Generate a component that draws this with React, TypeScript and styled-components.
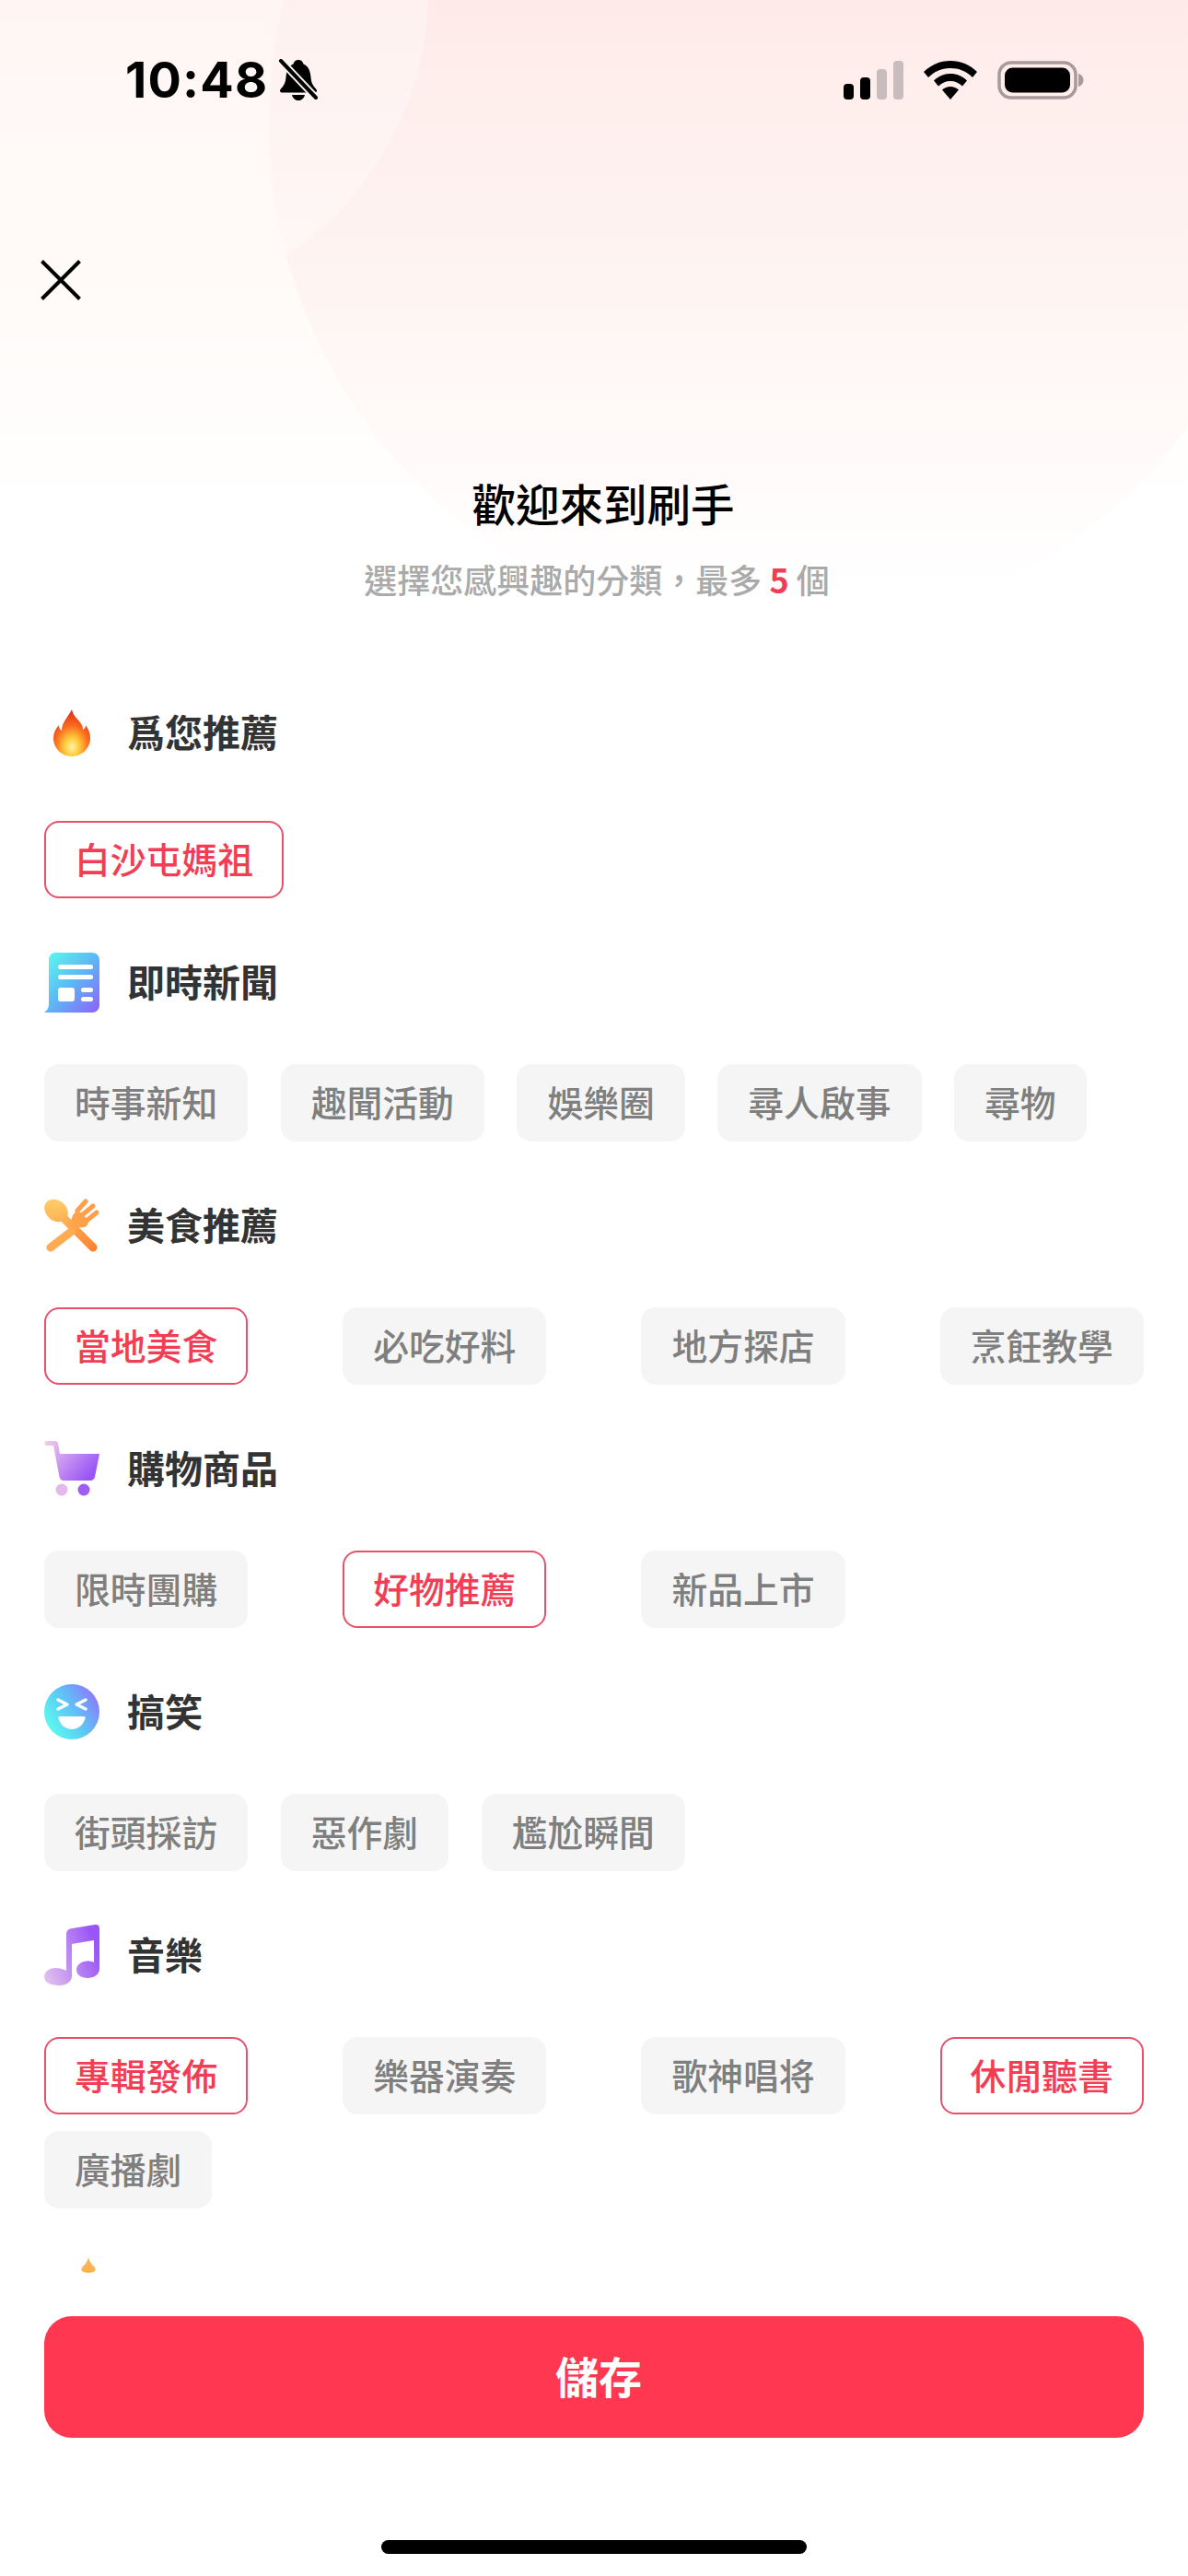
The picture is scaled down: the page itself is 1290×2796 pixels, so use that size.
import * as React from "react";
import styled, {createGlobalStyle} from "styled-components";

const FONT = `"Noto Sans CJK TC", "Noto Sans", sans-serif`;
const RED = "#f23d55";

const GlobalStyle = createGlobalStyle`
  html, body {
    margin: 0;
    padding: 0;
    background: #fff;
  }

  * {
    box-sizing: border-box;
  }
`;

const Page = styled.div`
  position: relative;
  width: 1290px;
  height: 2796px;
  overflow: hidden;
  display: flex;
  flex-direction: column;
  background: #fff;
  font-family: ${FONT};
`;

const Backdrop = styled.div`
  position: absolute;
  top: 0;
  left: 0;
  width: 100%;
  height: 640px;
  overflow: hidden;
  background: linear-gradient(180deg, #fff6f4 0%, #fff9f7 32%, #fffdfc 70%, #fff 88%);
`;

const BigCircle = styled.div`
  position: absolute;
  left: 292px;
  top: -419px;
  width: 1106px;
  height: 1106px;
  border-radius: 50%;
  overflow: hidden;
  background: linear-gradient(180deg, #feebe9 38%, #fef4f2 65%, #fffaf9 81%, #fff 96%);
`;

const SmallCircle = styled.div`
  position: absolute;
  left: -517px;
  top: 64px;
  width: 690px;
  height: 690px;
  border-radius: 50%;
  background: rgba(255, 255, 255, 0.32);
`;

const StatusBar = styled.div`
  position: relative;
  height: 174px;
  display: flex;
  align-items: center;
  justify-content: space-between;
  padding: 0 113px 0 136px;
`;

const TimeGroup = styled.div`
  display: flex;
  align-items: center;
  gap: 11px;
`;

const Time = styled.span`
  font-family: Inter, "Liberation Sans", sans-serif;
  font-size: 54px;
  font-weight: 700;
  line-height: 60px;
  letter-spacing: 1.2px;
  color: #000;
`;

const StatusIcons = styled.div`
  display: flex;
  align-items: flex-end;
  gap: 22px;
`;

const Nav = styled.div`
  position: relative;
  height: 152px;
  padding: 108px 0 0 44px;
  display: flex;
`;

const Header = styled.div`
  position: relative;
  margin-top: 190px;
  display: flex;
  flex-direction: column;
  align-items: center;
`;

const Title = styled.h1`
  margin: 0;
  padding-left: 20px;
  font-size: 47.5px;
  line-height: 60px;
  font-weight: 500;
  color: #000;
`;

const Subtitle = styled.p`
  margin: 27px 0 0;
  padding-left: 6px;
  height: 50px;
  font-size: 36px;
  line-height: 50px;
  font-weight: 500;
  color: #aaaaaa;
  white-space: pre;
`;

const Count = styled.b`
  font-weight: 700;
  color: ${RED};
`;

const List = styled.div`
  position: relative;
  flex: 1;
  min-height: 0;
  overflow: hidden;
  padding: 51px 48px 0;
`;

const Section = styled.section`
  display: flex;
  flex-direction: column;
  padding-top: 58px;
`;

const PeekSection = styled.section`
  padding-top: 53px;
`;

const SectionHead = styled.div<{ $first?: boolean }>`
  height: 66px;
  margin-bottom: ${p => (p.$first ? 63 : 56)}px;
  display: flex;
  align-items: center;
  gap: 30px;
`;

const IconSlot = styled.div`
  width: 60px;
  height: 66px;
  flex: none;
  display: flex;
  align-items: center;
  justify-content: center;
`;

const SectionName = styled.h2`
  margin: 0;
  padding-bottom: 4px;
  font-size: 41px;
  line-height: 62px;
  font-weight: 700;
  color: #333;
`;

const Chips = styled.div<{ $gap: number }>`
  display: flex;
  flex-wrap: wrap;
  margin-right: -4px;
  column-gap: ${p => p.$gap}px;
  row-gap: 18px;
`;

const Chip = styled.div<{ $on?: boolean }>`
  height: 84px;
  padding: 0 31px 4px;
  display: flex;
  align-items: center;
  justify-content: center;
  border-radius: 16px;
  font-size: 38.8px;
  font-weight: 500;
  white-space: nowrap;
  background: ${p => (p.$on ? "#fff" : "#f5f5f5")};
  color: ${p => (p.$on ? RED : "#7f7f7f")};
  border: 2px solid ${p => (p.$on ? "#e9506a" : "#f5f5f5")};
`;

const Footer = styled.div`
  position: relative;
  padding: 47px 48px 24px;
  display: flex;
  flex-direction: column;
  align-items: center;
`;

const SaveButton = styled.button`
  width: 100%;
  height: 132px;
  padding: 0 0 6px 10px;
  border: 0;
  border-radius: 30px;
  background: #ff3750;
  color: #fff;
  font-family: ${FONT};
  font-size: 47px;
  font-weight: 700;
`;

const HomeBar = styled.div`
  width: 462px;
  height: 15px;
  margin-top: 111px;
  border-radius: 8px;
  background: #000;
`;

const BellOff = () => (
    <svg width="44" height="47" viewBox="0 0 44 47">
        <path d="M22 1c3 0 5 2 5.500 4.500C33 8 35 13 35.500 20c.4 6 2.500 9 6 13 1.200 1.500.5 3.500-2 3.500H4.500c-2.500 0-3.200-2-2-3.500 3.500-4 5.600-7 6-13C9 13 11 8 16.500 5.500 17 3 19 1 22 1z" fill="#000"/>
        <path d="M15 39h14c-1 4-4 6-7 6s-6-2-7-6z" fill="#000"/>
        <path d="M3 2l38 40" stroke="#fdf3f1" strokeWidth="8"/>
        <path d="M3 2l38 40" stroke="#000" strokeWidth="4" strokeLinecap="round"/>
    </svg>
);

const Signal = () => (
    <svg width="65" height="42" viewBox="0 0 65 42">
        <rect x="0" y="25" width="11" height="17" rx="4" fill="#000"/>
        <rect x="18" y="18" width="11" height="24" rx="4" fill="#000"/>
        <rect x="36" y="9" width="11" height="33" rx="4" fill="#c9bcbc"/>
        <rect x="54" y="0" width="11" height="42" rx="4" fill="#c9bcbc"/>
    </svg>
);

const Wifi = () => (
    <svg width="58" height="42" viewBox="0 0 58 42">
        <path d="M29 0c11 0 21 4 29 12l-5 6C46 11 38 8 29 8S12 11 5 18l-5-6C8 4 18 0 29 0z" fill="#000"/>
        <path d="M29 14c7 0 13 2.500 18 7.500l-5 6c-3.500-3.500-8-5.500-13-5.500s-9.500 2-13 5.500l-5-6C16 16.500 22 14 29 14z" fill="#000"/>
        <path d="M29 28c3.500 0 6.500 1.200 9 3.500L29 42l-9-10.500c2.500-2.300 5.500-3.500 9-3.500z" fill="#000"/>
    </svg>
);

const Battery = () => (
    <svg width="94" height="42" viewBox="0 0 94 42">
        <rect x="2" y="2" width="83" height="38" rx="13" fill="none" stroke="#a89a9a" strokeWidth="3.500"/>
        <rect x="8" y="7.500" width="71" height="27" rx="8.500" fill="#000"/>
        <path d="M88 14c3.500 1 5.500 4 5.500 7s-2 6-5.500 7z" fill="#a89a9a"/>
    </svg>
);

const CloseIcon = () => (
    <svg width="44" height="44" viewBox="0 0 44 44">
        <path d="M1.500 1.500l41 41M42.500 1.500l-41 41" stroke="#000" strokeWidth="4"/>
    </svg>
);

const FlameIcon = () => (
    <svg width="40" height="51" viewBox="0 0 40 51">
        <defs>
            <radialGradient id="flame" cx="50%" cy="80%" r="75%">
                <stop offset="0" stopColor="#fff3a0"/>
                <stop offset="0.28" stopColor="#ffc93a"/>
                <stop offset="0.6" stopColor="#fb6d1e"/>
                <stop offset="1" stopColor="#e62e1a"/>
            </radialGradient>
        </defs>
        <path d="M20 0c1 6 5 9 9 14 2 3 3 5 3 8 2-1 3-3 3-5 3 4 5 9 5 14 0 11-9 20-20 20S0 42 0 31c0-5 2-10 6-14 0 3 1 5 3 6 0-9 7-15 11-23z" fill="url(#flame)"/>
    </svg>
);

const NewsIcon = () => (
    <svg width="60" height="65" viewBox="0 0 60 65">
        <defs>
            <linearGradient id="news" x1="0.1" y1="0" x2="1" y2="0.9">
                <stop offset="0" stopColor="#5cf7ef"/>
                <stop offset="0.5" stopColor="#5cb8f5"/>
                <stop offset="1" stopColor="#8a68fb"/>
            </linearGradient>
        </defs>
        <path d="M12 0h40c4.500 0 8 3.500 8 8v49c0 4.500-3.500 8-8 8H0c3-2 5-5 5-9V8c0-4.500 3-8 7-8z" fill="url(#news)"/>
        <rect x="15" y="13" width="38" height="5" rx="2.500" fill="#fff"/>
        <rect x="15" y="24" width="38" height="5" rx="2.500" fill="#fff"/>
        <rect x="15" y="38" width="18" height="15" rx="3" fill="#fff"/>
        <rect x="40" y="38" width="13" height="5" rx="2.500" fill="#fff"/>
        <rect x="40" y="48" width="13" height="5" rx="2.500" fill="#fff"/>
    </svg>
);

const FoodIcon = () => (
    <svg width="60" height="58" viewBox="0 0 60 58">
        <defs>
            <linearGradient id="food" gradientUnits="userSpaceOnUse" x1="0" y1="0" x2="60" y2="58">
                <stop offset="0" stopColor="#ffd36e"/>
                <stop offset="1" stopColor="#ff7a2c"/>
            </linearGradient>
        </defs>
        <ellipse cx="13" cy="13" rx="14" ry="11" transform="rotate(40 13 13)" fill="url(#food)"/>
        <path d="M16 16L53 53" stroke="url(#food)" strokeWidth="9" strokeLinecap="round"/>
        <path d="M29 36L7 53" stroke="#ffab52" strokeWidth="9" strokeLinecap="round"/>
        <path d="M36 13L45 3M41 18L53 8M46 24L57 15" stroke="#ff9f4a" strokeWidth="5" strokeLinecap="round"/>
        <path d="M31 18l5-6 13 12-3 6c-4 2-9 2-13-1l-4-5z" fill="#ffa24c"/>
    </svg>
);

const CartIcon = () => (
    <svg width="60" height="61" viewBox="0 0 60 61">
        <defs>
            <linearGradient id="cart" x1="0" y1="0" x2="1" y2="0.6">
                <stop offset="0" stopColor="#f4cfe9"/>
                <stop offset="1" stopColor="#9a55f7"/>
            </linearGradient>
        </defs>
        <path d="M2 0h10c1.500 0 2.500 1 3 2.500L17 14h43l-5 25c-.5 2-2 4-5 4H21c-2.500 0-4-2-4.500-4L10 5H2C0 5 0 0 2 0z" fill="url(#cart)"/>
        <ellipse cx="19" cy="53" rx="6.500" ry="6.500" fill="#e3b8ec"/>
        <ellipse cx="43" cy="53" rx="6.500" ry="6.500" fill="#a05df6"/>
    </svg>
);

const SmileIcon = () => (
    <svg width="60" height="60" viewBox="0 0 60 60">
        <defs>
            <linearGradient id="smile" x1="0.15" y1="0.85" x2="1" y2="0.3">
                <stop offset="0" stopColor="#5cf7ef"/>
                <stop offset="0.5" stopColor="#5ec4f6"/>
                <stop offset="1" stopColor="#8a7bfb"/>
            </linearGradient>
        </defs>
        <circle cx="30" cy="30" r="30" fill="url(#smile)"/>
        <path d="M15 17l10 5-10 5M45 17l-10 5 10 5" fill="none" stroke="#fff" strokeWidth="3.500" strokeLinecap="round" strokeLinejoin="round"/>
        <path d="M17 35h26c1.500 0 2 1 1.500 2.500C42.500 44 37 49 30 49s-12.500-5-14.500-11.500C15 36 15.500 35 17 35z" fill="#fff"/>
    </svg>
);

const MusicIcon = () => (
    <svg width="60" height="66" viewBox="0 0 60 66">
        <defs>
            <linearGradient id="music" x1="0" y1="0.9" x2="1" y2="0.5">
                <stop offset="0" stopColor="#e3c3ee"/>
                <stop offset="1" stopColor="#9a55f7"/>
            </linearGradient>
        </defs>
        <path d="M24 10c0-3 2-5 4-5.500L55 0c3-.4 5 1 5 4v44c0 6-6 10-13 10-7 0-12-3.500-12-9s6-9.500 12-9.500c2.500 0 5 .5 7 1.500V17l-24 4v35c0 6-7 10-13 10C5 66 0 62 0 56.500 0 51 6 47 12 47c4 0 8 1 12 3z" fill="url(#music)"/>
    </svg>
);

const PeekIcon = () => (
    <svg width="60" height="26" viewBox="0 0 60 26">
        <path d="M48 0c1 5 3 7 6 10 3 3 2 7-6 7s-9-4-6-7c3-3 5-5 6-10z" fill="#fdb450"/>
    </svg>
);

type Category = {
    name: string,
    icon: JSX.Element,
    gap: number,
    first?: boolean,
    chips: { label: string, on?: boolean }[],
};

const categories: Category[] = [
    {name: "爲您推薦", icon: <FlameIcon/>, gap: 35, first: true, chips: [{label: "白沙屯媽祖", on: true}]},
    {
        name: "即時新聞", icon: <NewsIcon/>, gap: 35.5, chips: [
            {label: "時事新知"}, {label: "趣聞活動"}, {label: "娛樂圈"}, {label: "尋人啟事"}, {label: "尋物"},
        ]
    },
    {
        name: "美食推薦", icon: <FoodIcon/>, gap: 103, chips: [
            {label: "當地美食", on: true}, {label: "必吃好料"}, {label: "地方探店"}, {label: "烹飪教學"},
        ]
    },
    {
        name: "購物商品", icon: <CartIcon/>, gap: 103, chips: [
            {label: "限時團購"}, {label: "好物推薦", on: true}, {label: "新品上市"},
        ]
    },
    {
        name: "搞笑", icon: <SmileIcon/>, gap: 35.5, chips: [
            {label: "街頭採訪"}, {label: "惡作劇"}, {label: "尷尬瞬間"},
        ]
    },
    {
        name: "音樂", icon: <MusicIcon/>, gap: 103, chips: [
            {label: "專輯發佈", on: true}, {label: "樂器演奏"}, {label: "歌神唱将"}, {label: "休閒聽書", on: true},
            {label: "廣播劇"},
        ]
    },
];

const App = () => {
    return (
        <Page>
            <GlobalStyle/>
            <Backdrop>
                <BigCircle>
                    <SmallCircle/>
                </BigCircle>
            </Backdrop>
            <StatusBar>
                <TimeGroup>
                    <Time>10:48</Time>
                    <BellOff/>
                </TimeGroup>
                <StatusIcons>
                    <Signal/>
                    <Wifi/>
                    <Battery/>
                </StatusIcons>
            </StatusBar>
            <Nav>
                <CloseIcon/>
            </Nav>
            <Header>
                <Title>歡迎來到刷手</Title>
                <Subtitle>選擇您感興趣的分類，最多 <Count>5</Count> 個</Subtitle>
            </Header>
            <List>
                {categories.map(cat => (
                    <Section key={cat.name}>
                        <SectionHead $first={cat.first}>
                            <IconSlot>{cat.icon}</IconSlot>
                            <SectionName>{cat.name}</SectionName>
                        </SectionHead>
                        <Chips $gap={cat.gap}>
                            {cat.chips.map(chip => (
                                <Chip key={chip.label} $on={chip.on}>{chip.label}</Chip>
                            ))}
                        </Chips>
                    </Section>
                ))}
                <PeekSection>
                    <PeekIcon/>
                </PeekSection>
            </List>
            <Footer>
                <SaveButton>儲存</SaveButton>
                <HomeBar/>
            </Footer>
        </Page>
    );
};

export default App;
